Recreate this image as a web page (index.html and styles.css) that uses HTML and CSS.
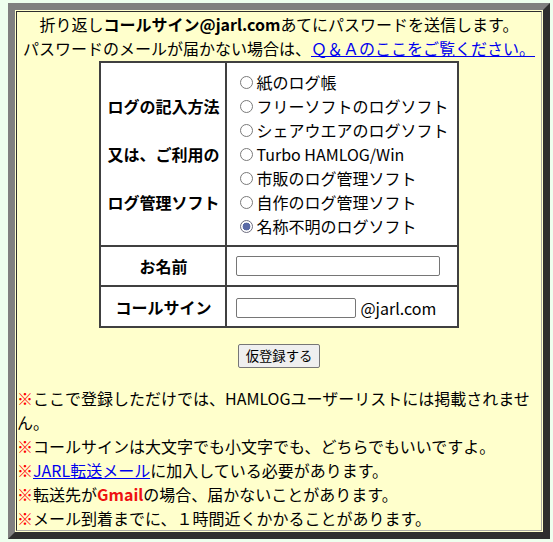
FILE: index.html
```html
<!DOCTYPE html>
<html lang="ja">
<head>
<meta charset="utf-8">
<title>パスワード送信</title>
<link rel="stylesheet" href="styles.css">
</head>
<body>
<div class="frame">
  <div class="inner">
    <p class="intro">折り返し<b>コールサイン@jarl.com</b>あてにパスワードを送信します。<br>パスワードのメールが届かない場合は、<a href="#">Ｑ＆Ａのここをご覧ください。</a></p>
    <table class="form">
      <tr>
        <td class="label label-log">ログの記入方法<br><br>又は、ご利用の<br><br>ログ管理ソフト</td>
        <td class="field field-log">
          <label class="opt"><input type="radio" name="log">紙のログ帳</label>
          <label class="opt"><input type="radio" name="log">フリーソフトのログソフト</label>
          <label class="opt"><input type="radio" name="log">シェアウエアのログソフト</label>
          <label class="opt"><input type="radio" name="log">Turbo HAMLOG/Win</label>
          <label class="opt"><input type="radio" name="log">市販のログ管理ソフト</label>
          <label class="opt"><input type="radio" name="log">自作のログ管理ソフト</label>
          <label class="opt"><input type="radio" name="log" checked>名称不明のログソフト</label>
        </td>
      </tr>
      <tr>
        <td class="label row-name">お名前</td>
        <td class="field row-name"><div class="fieldline"><input type="text" class="txt txt-name"></div></td>
      </tr>
      <tr>
        <td class="label row-call">コールサイン</td>
        <td class="field row-call"><div class="fieldline fieldline-call"><input type="text" class="txt txt-call"><span class="domain">@jarl.com</span></div></td>
      </tr>
    </table>
    <div class="submit"><button type="button" class="btn">仮登録する</button></div>
    <div class="notes">
      <div class="note"><span class="mark">※</span>ここで登録しただけでは、HAMLOGユーザーリストには掲載されません。</div>
      <div class="note"><span class="mark">※</span>コールサインは大文字でも小文字でも、どちらでもいいですよ。</div>
      <div class="note"><span class="mark">※</span><a href="#">JARL転送メール</a>に加入している必要があります。</div>
      <div class="note"><span class="mark">※</span>転送先が<b class="gmail">Gmail</b>の場合、届かないことがあります。</div>
      <div class="note"><span class="mark">※</span>メール到着までに、１時間近くかかることがあります。</div>
    </div>
  </div>
</div>
</body>
</html>
```
FILE: styles.css
```css
html, body {
  margin: 0;
  padding: 0;
  background: #eeffee;
}
body {
  font-family: "Noto Sans CJK JP", "Noto Sans", sans-serif;
  font-size: 16px;
  line-height: 24px;
  color: #000;
}
.frame {
  margin: 3px 0 0 8px;
  width: 542px;
  box-sizing: border-box;
  border: 7px solid;
  border-color: #808080 #2e2e2e #2e2e2e #808080;
  padding: 1px;
  background: #ffffcc;
}
.inner {
  border: 1px solid;
  border-color: #2e2e2e #a8a8a0 #a8a8a0 #2e2e2e;
}
.intro {
  margin: 0;
  text-align: center;
}
a {
  color: #0000ee;
  text-decoration: underline;
}
.form {
  border-collapse: separate;
  border-spacing: 0;
  border: 1px solid #404040;
  margin: 1px auto 0;
  background: #ffffff;
}
.form td {
  border: 1px solid #404040;
  padding: 0;
}
.label {
  width: 124px;
  text-align: center;
  font-weight: bold;
  vertical-align: middle;
}
.field {
  width: 211px;
  padding: 0 8px 0 9px !important;
  vertical-align: middle;
}
.field-log {
  padding-top: 7px !important;
  padding-bottom: 7px !important;
}
.opt {
  display: flex;
  align-items: center;
  height: 24px;
  white-space: nowrap;
}
.opt input {
  -webkit-appearance: none;
  appearance: none;
  width: 13px;
  height: 13px;
  margin: 1px 3px 0 4px;
  box-sizing: border-box;
  border: 1px solid #7a7a7a;
  border-radius: 50%;
  background: #ffffff;
  flex: none;
}
.opt input:checked {
  border-color: #6e6e80;
  background: radial-gradient(circle, #5a6aa6 0, #5a6aa6 3.6px, #ffffff 4.2px);
}
.row-name {
  height: 38px;
}
.row-call {
  height: 39px;
}
.fieldline {
  display: flex;
  align-items: center;
}
.fieldline-call {
  padding-top: 3px;
}
.txt {
  height: 20px;
  box-sizing: border-box;
  border: 1px solid #767676;
  border-radius: 2px;
  padding: 1px 2px;
  background: #fff;
  font: 13.33px "Noto Sans CJK JP", sans-serif;
  margin: 0;
}
.txt-name {
  width: 204px;
}
.txt-call {
  width: 120px;
}
.domain {
  margin-left: 4px;
}
.submit {
  display: flex;
  justify-content: center;
  margin: 16px 0 18px;
}
.btn {
  width: 82px;
  height: 24px;
  box-sizing: border-box;
  border: 1px solid #767676;
  border-radius: 2px;
  background: #efefef;
  color: #000;
  font: 13.33px/20px "Noto Sans CJK JP", sans-serif;
  padding: 0 6px;
  margin: 0;
}
.notes {
  text-align: left;
}
.mark {
  color: #ff0000;
}
.gmail {
  color: #ee1111;
}
```
